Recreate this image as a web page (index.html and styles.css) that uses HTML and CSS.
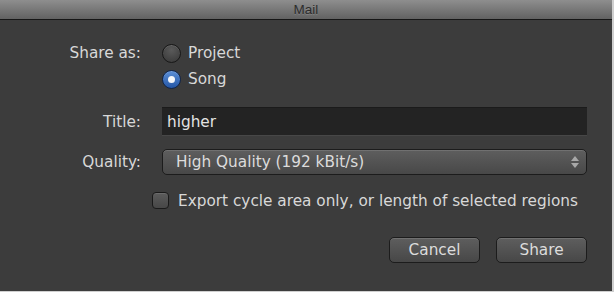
FILE: index.html
```html
<!DOCTYPE html>
<html>
<head>
<meta charset="utf-8">
<link rel="stylesheet" href="styles.css">
</head>
<body>
<div class="window">
  <div class="titlebar">Mail</div>
  <div class="content">
    <div class="row row-share">
      <div class="label">Share as:</div>
      <div class="radios">
        <div class="radio-item"><span class="radio"></span><span>Project</span></div>
        <div class="radio-item"><span class="radio checked"></span><span>Song</span></div>
      </div>
    </div>
    <div class="row row-title">
      <div class="label">Title:</div>
      <div class="input">higher</div>
    </div>
    <div class="row row-quality">
      <div class="label">Quality:</div>
      <div class="select">
        <span>High Quality (192 kBit/s)</span>
        <span class="arrows"><span class="up"></span><span class="down"></span></span>
      </div>
    </div>
    <div class="row-check">
      <span class="checkbox"></span>
      <span>Export cycle area only, or length of selected regions</span>
    </div>
    <div class="buttons">
      <div class="button">Cancel</div>
      <div class="button">Share</div>
    </div>
  </div>
</div>
</body>
</html>
```

FILE: styles.css
```css
html, body {
  margin: 0;
  padding: 0;
}
body {
  width: 614px;
  height: 292px;
  background: #cfcfcf;
  font-family: "DejaVu Sans", "Liberation Sans", sans-serif;
  font-size: 15.3px;
  color: #d8d8d8;
  overflow: hidden;
}
.window {
  width: 612px;
  height: 291px;
  background: #3c3c3c;
  display: flex;
  flex-direction: column;
}
.titlebar {
  height: 19px;
  flex: none;
  background: linear-gradient(#8e8e8e, #626262);
  border-bottom: 1px solid #161616;
  display: flex;
  align-items: center;
  justify-content: center;
  font-family: "Liberation Sans", sans-serif;
  font-size: 13.5px;
  color: #2c2c2c;
  text-shadow: 0 1px 0 rgba(255,255,255,0.15);
}
.content {
  display: flex;
  flex-direction: column;
  padding: 20px 25px 0 0;
}
.row {
  display: grid;
  grid-template-columns: 141px 1fr;
  column-gap: 21px;
  align-items: center;
}
.label {
  text-align: right;
}
.row-share {
  align-items: start;
}
.row-share .label {
  line-height: 26px;
}
.radios {
  display: flex;
  flex-direction: column;
}
.radio-item {
  height: 26px;
  display: flex;
  align-items: center;
  gap: 7px;
}
.radio {
  width: 19px;
  height: 19px;
  box-sizing: border-box;
  border-radius: 50%;
  border: 1px solid #171717;
  background: radial-gradient(circle at 50% 30%, #5a5a5a, #3e3e3e 80%);
  box-shadow: inset 0 1px 0 rgba(255,255,255,0.12);
  position: relative;
}
.radio.checked {
  border-color: #10244a;
  background: linear-gradient(#5c8fd6, #2456a6);
}
.radio.checked::after {
  content: "";
  position: absolute;
  left: 5px;
  top: 5px;
  width: 7px;
  height: 7px;
  border-radius: 50%;
  background: #f4f6fa;
}
.row-title {
  margin-top: 15px;
}
.input {
  height: 29px;
  box-sizing: border-box;
  background: #232323;
  border-top: 1px solid #1b1b1b;
  border-bottom: 1px solid #474747;
  padding-left: 5px;
  display: flex;
  align-items: center;
  color: #e2e2e2;
}
.row-quality {
  margin-top: 13px;
}
.select {
  height: 26px;
  box-sizing: border-box;
  border: 1px solid #1c1c1c;
  border-radius: 5px;
  background: linear-gradient(#5e5e5e, #484848);
  box-shadow: inset 0 1px 0 rgba(255,255,255,0.12);
  display: flex;
  align-items: center;
  justify-content: space-between;
  padding: 0 7px 0 13px;
  color: #dcdcdc;
}
.arrows {
  display: flex;
  flex-direction: column;
  gap: 2px;
}
.arrows .up {
  width: 0;
  height: 0;
  border-left: 4px solid transparent;
  border-right: 4px solid transparent;
  border-bottom: 5px solid #a8a8a8;
}
.arrows .down {
  width: 0;
  height: 0;
  border-left: 4px solid transparent;
  border-right: 4px solid transparent;
  border-top: 5px solid #a8a8a8;
}
.row-check {
  margin-top: 17px;
  padding-left: 152px;
  display: flex;
  align-items: center;
  gap: 9px;
  height: 17px;
}
.checkbox {
  width: 17px;
  height: 17px;
  box-sizing: border-box;
  border: 1px solid #1a1a1a;
  border-radius: 4px;
  background: linear-gradient(#5c5c5c, #474747);
  box-shadow: inset 0 1px 0 rgba(255,255,255,0.1);
  flex: none;
}
.buttons {
  margin-top: 28px;
  display: flex;
  justify-content: flex-end;
  gap: 16px;
}
.button {
  width: 91px;
  height: 26px;
  box-sizing: border-box;
  border: 1px solid #1c1c1c;
  border-radius: 5px;
  background: linear-gradient(#5e5e5e, #474747);
  box-shadow: inset 0 1px 0 rgba(255,255,255,0.12);
  display: flex;
  align-items: center;
  justify-content: center;
  color: #dcdcdc;
}
```
